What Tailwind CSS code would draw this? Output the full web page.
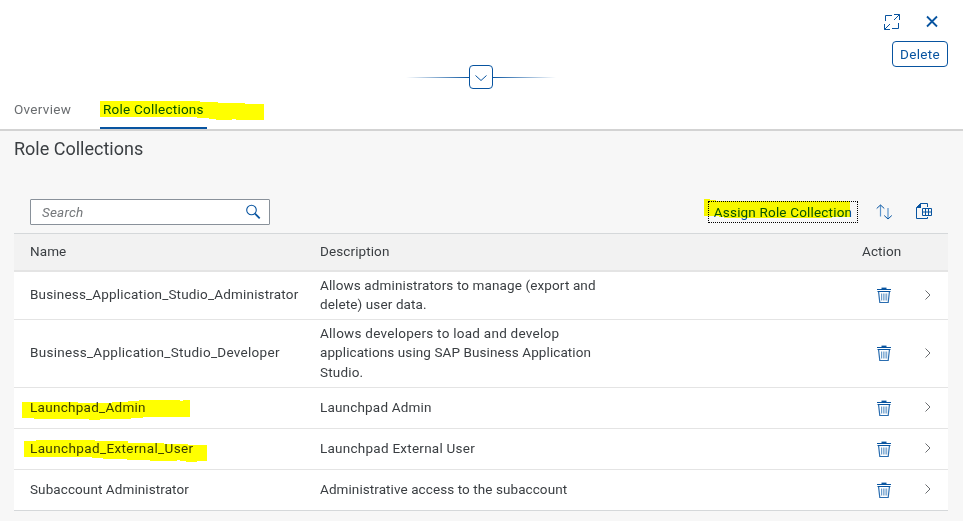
<!DOCTYPE html>
<html lang="en">
<head>
<meta charset="utf-8">
<title>Role Collections</title>
<script src="https://cdn.jsdelivr.net/npm/@tailwindcss/browser@4"></script>
</head>
<body class="w-[963px] h-[521px] overflow-hidden bg-[#f7f7f7] text-[#3a3e42] text-[13.5px] tracking-[0.18px] font-['Roboto','Liberation_Sans',sans-serif]">
<svg class="hidden">
  <symbol id="trash" viewBox="0 0 16 18"><path d="M1 3.5h14M1.5 5.5h13" stroke="#0854a0"/><path d="M5.5 2.3h5" stroke="#0854a0" stroke-width="1.4"/><path d="M2.6 6l1.2 10.5h8.4L13.4 6" fill="none" stroke="#2a6db0" stroke-width="1.2"/><path d="M5.5 7.5v7M7.3 7.5v7M9 7.5v7M10.7 7.5v7" stroke="#5a91c5" stroke-width=".9"/></symbol>
  <symbol id="next" viewBox="0 0 8 12"><path d="M1.5 1.5L6 6l-4.500 4.500" fill="none" stroke="#6a6d70" stroke-width="1"/></symbol>
</svg>
<header class="h-[131px] bg-white border-b-2 border-[#d3d3d3] flex flex-col">
  <div class="h-[41px] pr-[23px] pt-[14px] flex justify-end gap-[24px] text-[#0854a0]">
    <svg class="w-4 h-4" viewBox="0 0 16 16" fill="none" stroke="currentColor"><path d="M1.500 7V1.500H8M14.500 9v5.500H8M10 .5h5.500v5.500M15.500.5L10 6M.5 10v5.500H6M.5 15.500L6 10"/></svg>
    <svg class="w-4 h-4" viewBox="0 0 16 16" fill="none" stroke="currentColor" stroke-width="1.800"><path d="M3 2.500l10 10M13 2.500L3 12.500"/></svg>
  </div>
  <div class="h-[23px] pr-[15px] flex justify-end">
    <button class="w-[56px] h-[26px] shrink-0 rounded-[4px] border border-[#0854a0] text-[#0854a0] bg-white tracking-[0.3px]">Delete</button>
  </div>
  <div class="h-[26px] pl-[406px] flex items-center">
    <span class="w-[63px] h-px bg-linear-to-r from-transparent to-[#0854a0]"></span>
    <span class="w-[24px] h-[24px] rounded-[4px] border border-[#0854a0] flex items-center justify-center"><svg class="w-[14px] h-[8px] mt-px" viewBox="0 0 14 8" fill="none" stroke="#0854a0"><path d="M1.500 1.500L7 6.500l5.500-5"/></svg></span>
    <span class="w-[63px] h-px bg-linear-to-l from-transparent to-[#0854a0]"></span>
  </div>
  <nav class="h-[39px] pl-[14px] flex">
    <a class="w-[86px] pt-[9px] leading-[20px] text-[#6a6d70]"><span class="tracking-[0.3px]">Overview</span></a>
    <a class="relative w-[107px] pt-[9px] pl-[3px] leading-[20px] text-[#0854a0] border-b-2 border-[#0854a0] rounded-t-sm"><span class="tracking-[0.24px] whitespace-nowrap">Role Collections</span>
      <svg class="absolute left-0 top-[10px] w-[166px] h-[22px] mix-blend-multiply" viewBox="0 0 166 22"><path fill="#ff0" d="M0 1h100v1h18v1h27v1h19v16h-28v-1h-4v1h-16v-1h-7v-1h-12v-1H0z"/></svg>
    </a>
  </nav>
</header>
<main class="pl-[14px] pr-[15px]">
  <h1 class="h-[68px] pt-[6px] text-[18px] leading-[24px] tracking-[0px]">Role Collections</h1>
  <div class="h-[34px] pl-[16px] pr-[16px] flex items-start">
    <div class="w-[240px] h-[26px] bg-white border border-[#89919a] rounded-[1px] pl-[11px] pr-[8px] flex items-center justify-between text-[#74777a]"><span class="italic tracking-[0.2px]">Search</span>
      <svg class="w-4 h-4" viewBox="0 0 16 16" fill="none" stroke="#0854a0"><circle cx="6.500" cy="6" r="4.800" stroke-width="1.100"/><path d="M10 9.700l4.700 4.700" stroke-width="1.800"/></svg></div>
    <button class="relative ml-auto mt-[2px] w-[150px] h-[22px] border border-dotted border-black text-[#0854a0] leading-[20px] whitespace-nowrap"><span class="tracking-[0.18px]">Assign Role Collection</span>
      <svg class="absolute -left-[5px] -top-[4px] w-[148px] h-[22px] mix-blend-multiply" viewBox="0 0 148 22"><path fill="#ff0" d="M0 1h6v1h6v1h134v16h-18v1H20v-1h-5v-1H0z"/></svg></button>
    <svg class="ml-[18px] mt-[5px] w-4 h-4" viewBox="0 0 16 16" fill="none" stroke="#0854a0"><path d="M4.500 1v11.500M12 4v11" stroke="#5b94cc" stroke-width="1.200"/><path d="M.7 4.500l3.800-3.500 3.800 3.500M8.200 11.500l3.800 3.500 3.800-3.500"/></svg>
    <svg class="ml-[24px] mt-[4px] w-4 h-4" viewBox="0 0 16 16" fill="none" stroke="#0854a0"><path d="M11.500 4V.5h-7L.5 4.500v11h11V14"/><path d="M5 0v5H0z" fill="#0854a0" stroke="none"/><path d="M6.500 5.500h9v7h-9zM6 9h10M9.500 5v8M12.500 5v8"/></svg>
  </div>
  <section class="bg-white">
    <div class="h-[39px] border-t border-b-2 border-t-[#d5d8da] border-b-[#e4e4e4] bg-[#f2f2f2] grid grid-cols-[290px_542px_1fr] items-center pl-[16px] pb-[2px]"><span class="tracking-[0.1px]">Name</span><span class="tracking-[0.1px]">Description</span><span class="tracking-[0.1px]">Action</span></div>
    <div class="h-[48px] border-b border-[#e4e4e4] grid grid-cols-[290px_542px_44px_1fr] items-center pl-[16px] pb-[2px]">
      <span class="tracking-[0.18px]">Business_Application_Studio_Administrator</span><span class="leading-[19px] tracking-[0.12px]">Allows administrators to manage (export and<br>delete) user data.</span>
      <svg class="w-4 h-[18px] ml-[14px]"><use href="#trash"/></svg><svg class="w-2 h-3 ml-[18px]"><use href="#next"/></svg></div>
    <div class="h-[68px] border-b border-[#e4e4e4] grid grid-cols-[290px_542px_44px_1fr] items-center pl-[16px] pb-[2px]">
      <span class="tracking-[0.29px]">Business_Application_Studio_Developer</span><span class="leading-[19.500px] pt-px"><span class="tracking-[0.26px]">Allows developers to load and develop</span><br><span class="tracking-[0.09px]">applications using SAP Business Application</span><br>Studio.</span>
      <svg class="w-4 h-[18px] ml-[14px]"><use href="#trash"/></svg><svg class="w-2 h-3 ml-[18px]"><use href="#next"/></svg></div>
    <div class="h-[41px] border-b border-[#e4e4e4] grid grid-cols-[290px_542px_44px_1fr] items-center pl-[16px] pb-[2px]">
      <span class="relative tracking-[0.28px]">Launchpad_Admin
        <svg class="absolute -left-[8px] top-[2px] w-[168px] h-[22px] mix-blend-multiply" viewBox="0 0 168 22"><path fill="#ff0" d="M0 3h56v1h34v-1h16v-1h11V1h41v1h3V1h7v17h-47v1h-12v1H78v1H67v-1H12v-1H0z"/></svg></span><span>Launchpad Admin</span>
      <svg class="w-4 h-[18px] ml-[14px] mt-[2px]"><use href="#trash"/></svg><svg class="w-2 h-3 ml-[18px]"><use href="#next"/></svg></div>
    <div class="h-[41px] border-b border-[#e4e4e4] grid grid-cols-[290px_542px_44px_1fr] items-center pl-[16px] pb-[2px]">
      <span class="relative tracking-[0.38px]">Launchpad_External_User
        <svg class="absolute -left-[6px] top-[2px] w-[184px] h-[23px] mix-blend-multiply" viewBox="0 0 184 23"><path fill="#ff0" d="M0 1h12V0h59v1h33v2h36v1h24v1h19v16h-10v1h-11v-1h-6v-1h-3v1h-27v-1h-23v-1H79v-1H68v-1H0z"/></svg></span><span class="tracking-[0.25px]">Launchpad External User</span>
      <svg class="w-4 h-[18px] ml-[14px] mt-[2px]"><use href="#trash"/></svg><svg class="w-2 h-3 ml-[18px]"><use href="#next"/></svg></div>
    <div class="h-[41px] border-b border-[#d5d8da] grid grid-cols-[290px_542px_44px_1fr] items-center pl-[16px] pb-[2px]">
      <span class="tracking-[0.09px]">Subaccount Administrator</span><span class="tracking-[0.08px]">Administrative access to the subaccount</span>
      <svg class="w-4 h-[18px] ml-[14px] mt-[2px]"><use href="#trash"/></svg><svg class="w-2 h-3 ml-[18px]"><use href="#next"/></svg></div>
  </section>
</main>
</body>
</html>
